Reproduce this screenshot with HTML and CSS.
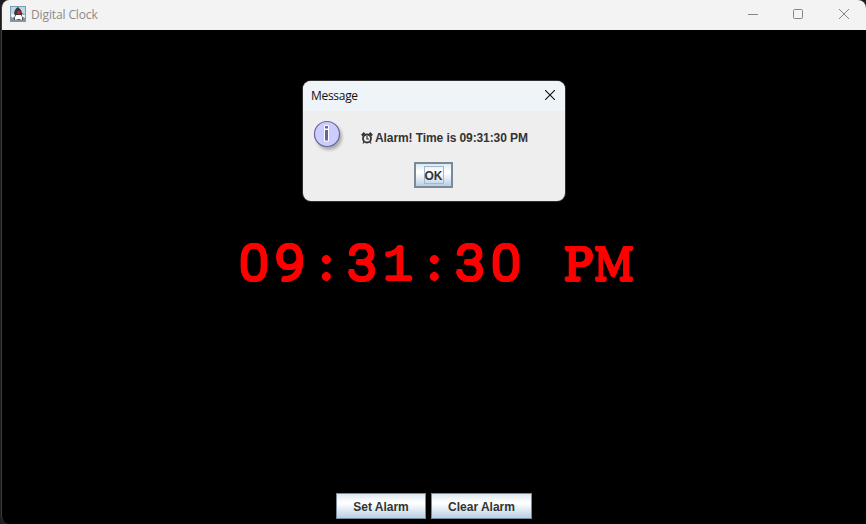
FILE: index.html
```html
<!DOCTYPE html>
<html lang="en">
<head>
<meta charset="utf-8">
<title>Digital Clock</title>
<link rel="stylesheet" href="styles.css">
</head>
<body>
<main class="window">
  <header class="titlebar">
    <svg class="app-icon" width="16" height="16" viewBox="0 0 16 16">
      <rect x=".5" y=".5" width="15" height="15" fill="#c2d5e5" stroke="#789bb6"/>
      <path d="M1 11h14v4H1z" fill="#87949d"/>
      <path d="M6.500 2 5 4 4 7l-2 1v2l3-1-1 5h9l-1-5 2 1 1-1-3-2-1-3-3-3z" fill="#34393f"/>
      <path d="M6 9h5l1 2v3l-3-1-4 1v-3z" fill="#fff"/>
      <path d="m1 8 3-1 1 3-3 2zM12 8l3 1v3l-3-2z" fill="#f4f4f4"/>
      <circle cx="8.800" cy="6.500" r="1.800" fill="#ec1b22"/>
    </svg>
    <span class="title">Digital Clock</span>
    <div class="controls">
      <svg width="10" height="10" viewBox="0 0 10 10"><path d="M0 5.500h10"/></svg>
      <svg width="10" height="10" viewBox="0 0 10 10"><rect x=".5" y=".5" width="9" height="9" rx="1"/></svg>
      <svg width="10" height="10" viewBox="0 0 10 10"><path d="m0 0 10 10M10 0 0 10"/></svg>
    </div>
  </header>
  <section class="content">
    <div class="clock"><span class="digit">0</span><span class="digit">9</span><span class="colon">:</span><span class="digit">3</span><span class="one">1</span><span class="colon">:</span><span class="digit">3</span><span class="digit">0</span><span> </span><span class="slab">P</span><span class="slab wide">M</span></div>
  </section>
  <footer class="actions">
    <button class="btn set">Set Alarm</button>
    <button class="btn clear">Clear Alarm</button>
  </footer>
</main>
<div class="dialog">
  <div class="dialog-head">
    <span>Message</span>
    <svg width="10" height="10" viewBox="0 0 10 10"><path d="m0 0 10 10M10 0 0 10" stroke="#111" stroke-width="1.1"/></svg>
  </div>
  <div class="dialog-body">
    <svg class="info" width="32" height="32" viewBox="0 0 32 32">
      <circle class="info-shadow" cx="16" cy="17" r="13"/>
      <circle cx="14" cy="14" r="12.5" fill="#ccccff" stroke="#666699" stroke-width="1.2"/>
      <path d="M11.500 5.500h4v3.500h-4zM11.500 9.500h4v11.500h-4z" fill="#666699" stroke="#fff"/>
    </svg>
    <div class="message">
      <svg width="12" height="12" viewBox="0 0 12 12" fill="none" stroke="#333">
        <circle cx="6" cy="6.500" r="4" stroke-width="1.800"/>
        <path d="M.8 3.500 3.500.900M8.500.900l2.700 2.600" stroke-width="2.200"/>
        <path d="M6 4v3h2M3.300 9.500 2 11.500M8.700 9.500l1.300 2" stroke-width="1.200"/>
      </svg>
      <span>Alarm! Time is 09:31:30 PM</span>
    </div>
  </div>
  <button class="btn ok"><span>OK</span></button>
</div>
</body>
</html>
```
FILE: styles.css
```css
* { box-sizing: border-box; }
body {
  margin: 0;
  width: 866px;
  height: 524px;
  overflow: hidden;
  background: #1b1b20;
}
.window {
  height: 524px;
  margin-left: 1px;
  border-left: 1px solid #3c3c3c;
  border-radius: 8px 8px 0 8px;
  overflow: hidden;
  background: #000;
  display: flex;
  flex-direction: column;
}
.titlebar {
  height: 30px;
  flex: none;
  display: flex;
  align-items: center;
  padding: 0 17px 2px 8px;
  background: #f3f3f3;
  color: #8b8b8b;
  font: 12px "Open Sans", "Noto Sans", sans-serif;
}
.title { margin-left: 5px; letter-spacing: -.12px; line-height: 16px; padding-top: 1px; }
.controls { display: flex; gap: 35px; margin-left: auto; }
.controls svg { fill: none; stroke: #858585; }
.controls svg:nth-child(3) { margin-left: 1px; }
.content {
  flex: 1;
  display: flex;
  justify-content: center;
  padding-top: 200px;
}
.clock {
  display: flex;
  align-items: baseline;
  height: 66px;
  color: #f00;
  font: 300 50px/66px Roboto, sans-serif;
  text-shadow:
    1.700px 0 #f00, -1.700px 0 #f00, 0 1.700px #f00, 0 -1.700px #f00,
    1.200px 1.200px #f00, -1.200px 1.200px #f00,
    1.200px -1.200px #f00, -1.200px -1.200px #f00;
}
.clock span { width: 36px; display: flex; justify-content: center; white-space: pre; }
.clock .digit { transform: translateY(.5px) scaleX(1.06); }
.clock .one { font-family: "Liberation Mono", monospace; font-size: 52px; font-weight: 400; text-shadow: 1px 0 #f00, -1px 0 #f00, 0 1px #f00, 0 -1px #f00; }
.clock .colon { font-family: "Open Sans", sans-serif; font-size: 41px; font-weight: 400; transform: translateY(-1px) scaleX(1.08); }
.clock .slab {
  font-family: "DejaVu Serif", serif;
  font-size: 44px;
  font-weight: 400;
  text-shadow: 1px 0 #f00, -1px 0 #f00, 0 1.500px #f00, 0 -1px #f00, 1px 1px #f00, -1px -1px #f00, 1px -1px #f00, -1px 1px #f00;
}
.clock .wide { transform: scaleX(.89); }
.actions {
  display: flex;
  justify-content: center;
  gap: 5px;
  padding-bottom: 5px;
}
.btn {
  height: 26px;
  padding: 1px 0 0;
  border: 1px solid #7a8a99;
  background: linear-gradient(#dde8f3 0%, #fff 35%, #fff 40%, #b8cfe5 100%);
  color: #333;
  font: bold 12px/14px "Liberation Sans", sans-serif;
}
.set { width: 90px; }
.clear { width: 101px; }
.dialog {
  position: absolute;
  left: 303px;
  top: 81px;
  width: 262px;
  height: 120px;
  border-radius: 8px;
  overflow: hidden;
  background: #eee;
  box-shadow: 0 0 0 1px #303030;
}
.dialog-head {
  height: 30px;
  display: flex;
  align-items: center;
  justify-content: space-between;
  padding: 0 10px 0 8px;
  background: #eff4f9;
  color: #111;
  font: 12px/16px "Open Sans", "Noto Sans", sans-serif;
  letter-spacing: -.3px;
}
.dialog-head svg { margin-top: -2px; }
.dialog-body { display: flex; height: 51px; padding: 9px 0 0 10px; }
.info-shadow { fill: #777; opacity: .55; filter: blur(1.5px); }
.message {
  display: flex;
  align-items: center;
  gap: 2px;
  height: 14px;
  margin: 11px 0 0 16px;
  color: #333;
  font: bold 12px/14px "Liberation Sans", sans-serif;
  letter-spacing: -.09px;
  white-space: nowrap;
}
.ok {
  display: flex;
  align-items: center;
  justify-content: center;
  width: 39px;
  margin-left: 111px;
  padding: 0;
  border-width: 2px;
}
.ok span { border: 1px solid #a3b8cc; padding: 2px 0 0; height: 18px; }
```
